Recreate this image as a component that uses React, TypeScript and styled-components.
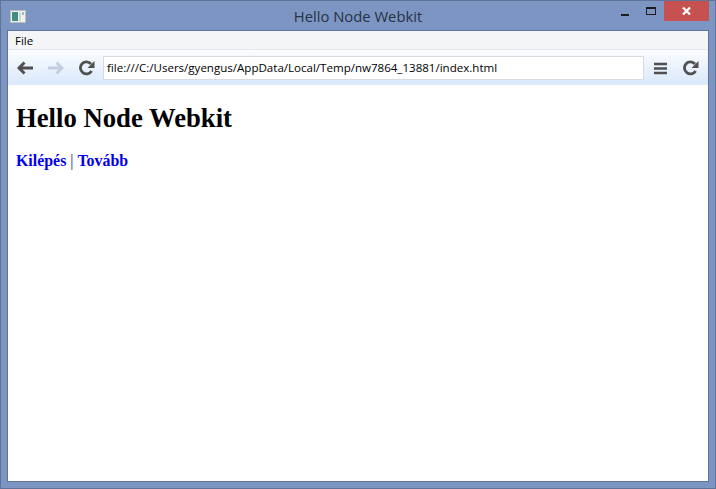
import React from "react";
import styled, { createGlobalStyle } from "styled-components";

const Global = createGlobalStyle`
  html, body { margin: 0; padding: 0; width: 716px; height: 489px; overflow: hidden; }
  #root { width: 716px; height: 489px; }
`;

const Win = styled.div`
  box-sizing: border-box;
  width: 716px;
  height: 489px;
  background: #7c95c2;
  border: 1px solid #5f7399;
  display: flex;
  flex-direction: column;
  padding: 0 6px 6px;
`;

const TitleBar = styled.div`
  height: 29px;
  flex: none;
  display: grid;
  grid-template-columns: 1fr auto 1fr;
  align-items: start;
`;

const AppIcon = styled.svg`
  display: block;
  margin: 9px 0 0 3px;
`;

const Title = styled.div`
  font: 14.8px/30px "Open Sans", "Liberation Sans", sans-serif;
  color: #2a3242;
`;

const Caption = styled.div`
  display: flex;
  justify-content: flex-end;
  align-items: flex-start;
`;

const CapBtn = styled.div<{ $w: number }>`
  width: ${(p) => p.$w}px;
  height: 20px;
  display: flex;
  align-items: center;
  justify-content: center;
`;

const CloseBtn = styled(CapBtn)`
  background: #c75050;
`;

const Client = styled.div`
  flex: 1;
  display: flex;
  flex-direction: column;
  border: 1px solid #5f7399;
  background: #fff;
  min-height: 0;
`;

const MenuBar = styled.div`
  height: 18px;
  flex: none;
  background: #f4f5f7;
  border-bottom: 1px solid #e6e8eb;
  font: 11.5px/19px "Open Sans", "Liberation Sans", sans-serif;
  color: #000;
  padding-left: 7px;
`;

const Toolbar = styled.div`
  height: 35px;
  flex: none;
  box-sizing: border-box;
  background: linear-gradient(#fbfdff, #d9e8fb);
  display: flex;
  align-items: center;
  padding: 1px 0 0 1px;
`;

const ToolBtn = styled.button<{ $w: number }>`
  all: unset;
  width: ${(p) => p.$w}px;
  height: 24px;
  flex: none;
  display: flex;
  align-items: center;
  justify-content: center;
`;

const Address = styled.div`
  flex: 1;
  box-sizing: border-box;
  height: 24px;
  margin: 0 4px 0 1px;
  background: #fff;
  border: 1px solid #d6dbe1;
  font: 11.55px/22px "Open Sans", "Liberation Sans", sans-serif;
  color: #000;
  padding-left: 3px;
  white-space: nowrap;
`;

const Page = styled.main`
  flex: 1;
  padding: 0 8px;
  font-family: "Liberation Serif", "Times New Roman", serif;
  color: #000;
`;

const Heading = styled.h1`
  font-size: 26.7px;
  line-height: 30px;
  font-weight: bold;
  margin: 18px 0 0;
`;

const Links = styled.p`
  font-size: 15.9px;
  line-height: 18px;
  margin: 19px 0 0;
  color: #333366;
`;

const Link = styled.a`
  color: #0000ee;
  font-weight: bold;
  text-decoration: none;
`;

const Arrow = ({ color, flip }: { color: string; flip?: boolean }) => (
  <svg width="16" height="14" viewBox="0 0 16 14" style={flip ? { transform: "scaleX(-1)" } : undefined}>
    <path d="M1 7h15M7.5 1.5 2 7l5.5 5.5" fill="none" stroke={color} strokeWidth="3" />
  </svg>
);

const Reload = () => (
  <svg width="16" height="16" viewBox="0 0 16 16">
    <path d="M12.6 11a6 6 0 1 1 -.6-7" fill="none" stroke="#505050" strokeWidth="2.8" />
    <path d="M15.5 1v7h-7z" fill="#505050" />
  </svg>
);

export default function App() {
  return (
    <>
      <Global />
      <Win>
        <TitleBar>
          <AppIcon width="16" height="14" viewBox="0 0 16 14">
            <rect x="0.5" y="0.5" width="15" height="12" fill="#f2f2ee" stroke="#b8bdc4" />
            <rect x="2" y="2" width="6" height="9" fill="#3f8f80" />
            <rect x="9" y="2" width="2" height="9" fill="#c8d8d8" />
            <rect x="12" y="2" width="2" height="3" fill="#9fb8c8" />
          </AppIcon>
          <Title>Hello Node Webkit</Title>
          <Caption>
            <CapBtn $w={26}>
              <svg width="9" height="14" viewBox="0 0 9 14">
                <rect x="0" y="10" width="8" height="2" fill="#1c1c1c" />
              </svg>
            </CapBtn>
            <CapBtn $w={26}>
              <svg width="11" height="10" viewBox="0 0 11 10">
                <rect x="0.5" y="1.5" width="9" height="7" fill="none" stroke="#1c1c1c" />
                <rect x="0" y="1" width="10" height="2" fill="#1c1c1c" />
              </svg>
            </CapBtn>
            <CloseBtn $w={45}>
              <svg width="9" height="8" viewBox="0 0 9 8">
                <path d="M1 0.5 8 7.5M8 0.5 1 7.5" stroke="#fff" strokeWidth="2.2" />
              </svg>
            </CloseBtn>
          </Caption>
        </TitleBar>
        <Client>
          <MenuBar>File</MenuBar>
          <Toolbar>
            <ToolBtn $w={31}><Arrow color="#505050" /></ToolBtn>
            <ToolBtn $w={31}><Arrow color="#c3cfe0" flip /></ToolBtn>
            <ToolBtn $w={31}><Reload /></ToolBtn>
            <Address>file:///C:/Users/gyengus/AppData/Local/Temp/nw7864_13881/index.html</Address>
            <ToolBtn $w={26}>
              <svg width="14" height="13" viewBox="0 0 14 13">
                <path d="M0 2h13M0 6.5h13M0 11h13" stroke="#505050" strokeWidth="2.4" />
              </svg>
            </ToolBtn>
            <ToolBtn $w={34}><Reload /></ToolBtn>
          </Toolbar>
          <Page>
            <Heading>Hello Node Webkit</Heading>
            <Links>
              <Link href="#">Kilépés</Link> | <Link href="#">Tovább</Link>
            </Links>
          </Page>
        </Client>
      </Win>
    </>
  );
}
